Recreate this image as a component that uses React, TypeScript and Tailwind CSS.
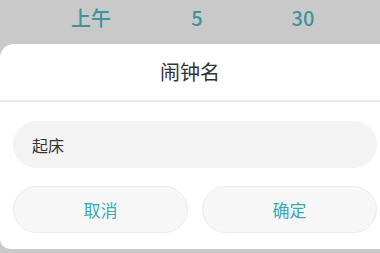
export default function App() {
  const font = { fontFamily: '"Noto Sans CJK SC", "Noto Sans", sans-serif' }
  return (
    <div
      className="w-[380px] h-[253px] bg-[#c9c9c9] overflow-hidden flex flex-col"
      style={font}
    >
      {/* picker row behind the dialog */}
      <div className="h-[44px] shrink-0 flex items-center pl-[38px] text-[#3d929b] text-[20px] font-medium leading-none pb-[8px]">
        <div className="w-[106px] text-center">上午</div>
        <div className="w-[106px] text-center">5</div>
        <div className="w-[106px] text-center">30</div>
      </div>

      {/* dialog */}
      <div className="h-[205px] shrink-0 bg-white rounded-tl-[14px] rounded-bl-[10px] flex flex-col">
        <div className="h-[56px] flex items-center justify-center text-[20px] text-[#333] pb-[1px]">闹钟名</div>
        <div className="h-[2px] bg-[#ebebeb]" />
        <div className="pl-[13px] pr-[3px] pt-[19px]">
          <div className="h-[47px] rounded-full bg-[#f3f3f3] flex items-center pl-[19px] text-[16px] text-[#333]">
            起床
          </div>
          <div className="mt-[18px] flex gap-[14px]">
            <button className="w-[175px] h-[47px] rounded-full bg-[#f7f7f7] border border-[#ececec] text-[17px] text-[#3aa9b2]">
              取消
            </button>
            <button className="w-[175px] h-[47px] rounded-full bg-[#f7f7f7] border border-[#ececec] text-[17px] text-[#3aa9b2]">
              确定
            </button>
          </div>
        </div>
      </div>
    </div>
  )
}
